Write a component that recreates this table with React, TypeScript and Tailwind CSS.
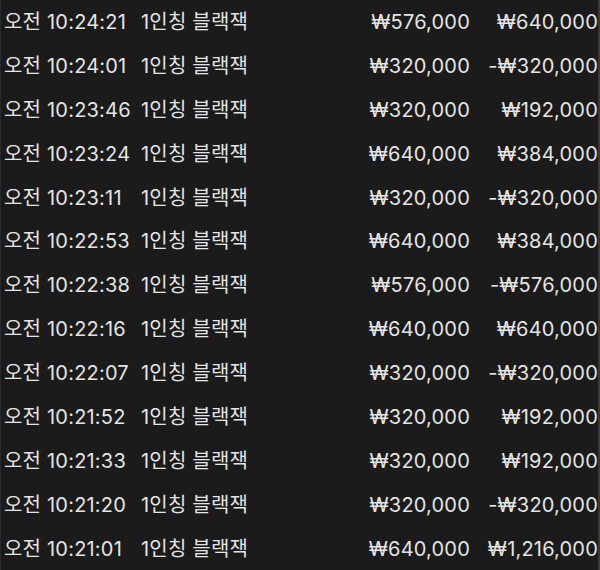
const rows: [string, string, string, string][] = [
  ["오전 10:24:21", "1인칭 블랙잭", "₩576,000", "₩640,000"],
  ["오전 10:24:01", "1인칭 블랙잭", "₩320,000", "-₩320,000"],
  ["오전 10:23:46", "1인칭 블랙잭", "₩320,000", "₩192,000"],
  ["오전 10:23:24", "1인칭 블랙잭", "₩640,000", "₩384,000"],
  ["오전 10:23:11", "1인칭 블랙잭", "₩320,000", "-₩320,000"],
  ["오전 10:22:53", "1인칭 블랙잭", "₩640,000", "₩384,000"],
  ["오전 10:22:38", "1인칭 블랙잭", "₩576,000", "-₩576,000"],
  ["오전 10:22:16", "1인칭 블랙잭", "₩640,000", "₩640,000"],
  ["오전 10:22:07", "1인칭 블랙잭", "₩320,000", "-₩320,000"],
  ["오전 10:21:52", "1인칭 블랙잭", "₩320,000", "₩192,000"],
  ["오전 10:21:33", "1인칭 블랙잭", "₩320,000", "₩192,000"],
  ["오전 10:21:20", "1인칭 블랙잭", "₩320,000", "-₩320,000"],
  ["오전 10:21:01", "1인칭 블랙잭", "₩640,000", "₩1,216,000"],
];

export default function App() {
  return (
    <div
      className="w-[600px] h-[570px] overflow-hidden bg-[#1b1b1b] border-l border-r-2 border-l-[#2a2a2a] border-r-[#3a3a3a] text-[#e4e4e4] text-[20px] tracking-[0.2px]"
      style={{ fontFamily: 'Inter, "Noto Sans CJK KR", sans-serif' }}
    >
      <div className="pl-[3px]">
        {rows.map(([time, game, bet, result], i) => (
          <div key={i} className="flex items-center h-[43.9px] whitespace-nowrap">
            <span className="w-[137px]">{time}</span>
            <span className="flex-1">{game}</span>
            <span className="w-[140px] text-right">{bet}</span>
            <span className="w-[128px] text-right">{result}</span>
          </div>
        ))}
      </div>
    </div>
  );
}
